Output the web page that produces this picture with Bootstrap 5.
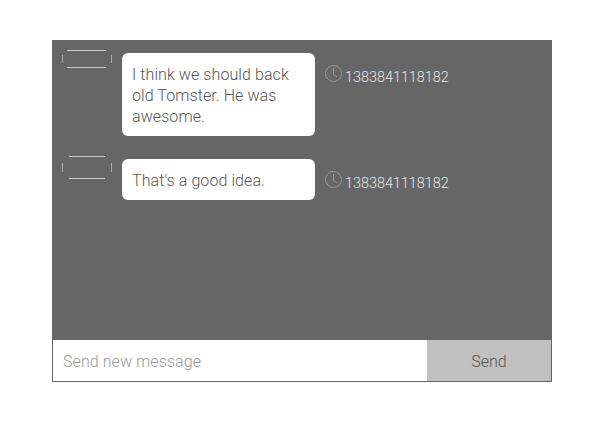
<!DOCTYPE html>
<html lang="en">
<head>
  <meta charset="UTF-8">
  <meta name="viewport" content="width=device-width, initial-scale=1.0">
  <title>Chat</title>
  <link href="https://cdn.jsdelivr.net/npm/bootstrap@5.3.0/dist/css/bootstrap.min.css" rel="stylesheet">
  <style>
    body {
      background-color: #fff;
      font-family: Roboto, "Liberation Sans", sans-serif;
      font-weight: 300;
    }

    .chat-box {
      width: 500px;
      height: 342px;
      margin: 40px 0 0 52px;
      background-color: #666;
    }

    .chat-messages {
      padding: 10px 0 0 10px;
    }

    .chat-item {
      margin-bottom: 20px;
    }

    .chat-avatar {
      width: 50px;
      height: 20px;
      margin-right: 10px;
    }

    .chat-avatar-tall {
      height: 24px;
    }

    .chat-bubble {
      width: 193px;
      margin: 3px 10px 0 0;
      padding: 11px 10px 9px;
      background-color: #fff;
      border-radius: 6px;
      color: #555;
      font-size: 16px;
      line-height: 21px;
      letter-spacing: .08px;
    }

    .chat-time {
      margin-top: 13px;
      color: #e6e6e6;
      font-size: 14.4px;
      line-height: 21px;
    }

    .chat-time span {
      margin-top: 4px;
    }

    .chat-clock {
      width: 18px;
      height: 18px;
      margin: 2px 2px 0 0;
    }

    .chat-form {
      height: 42px;
      border: 1px solid #666;
      border-top: 0;
    }

    .chat-input {
      padding: 2px 10px 0;
      border: 0;
      outline: 0;
      font-size: 16px;
      font-weight: 300;
      letter-spacing: .08px;
      color: #555;
    }

    .chat-input::placeholder {
      color: #999;
    }

    .chat-send {
      width: 124px;
      padding: 2px 0 0;
      border: 0;
      background-color: #c0c0c0;
      color: #555;
      font-size: 16px;
      font-weight: 300;
    }
  </style>
</head>
<body>
  <div class="chat-box d-flex flex-column">
    <div class="chat-messages flex-grow-1">
      <div class="chat-item d-flex align-items-start">
        <svg class="chat-avatar flex-shrink-0" viewBox="0 0 50 20">
          <path d="M5 .5H44M5 17.5H44" fill="none" stroke="#ccc" stroke-width="1"/>
          <path d="M.5 5V13M49.5 5V13" fill="none" stroke="#aaa" stroke-width="1"/>
        </svg>
        <div class="chat-bubble">I think we should back old Tomster. He was awesome.</div>
        <div class="chat-time d-flex align-items-start">
          <svg class="chat-clock flex-shrink-0" viewBox="0 0 18 18">
            <circle cx="8.5" cy="8.5" r="8" fill="none" stroke="#999" stroke-width="1"/>
            <path d="M8.5 3V9.5L12 12" fill="none" stroke="#999" stroke-width="1"/>
          </svg>
          <span>1383841118182</span>
        </div>
      </div>
      <div class="chat-item d-flex align-items-start">
        <svg class="chat-avatar chat-avatar-tall flex-shrink-0" viewBox="0 0 50 24">
          <path d="M7 .5H43M7 22.5H43" fill="none" stroke="#ccc" stroke-width="1"/>
          <path d="M.5 7V16M49.5 7V16" fill="none" stroke="#aaa" stroke-width="1"/>
        </svg>
        <div class="chat-bubble">That's a good idea.</div>
        <div class="chat-time d-flex align-items-start">
          <svg class="chat-clock flex-shrink-0" viewBox="0 0 18 18">
            <circle cx="8.5" cy="8.5" r="8" fill="none" stroke="#999" stroke-width="1"/>
            <path d="M8.5 3V9.5L12 12" fill="none" stroke="#999" stroke-width="1"/>
          </svg>
          <span>1383841118182</span>
        </div>
      </div>
    </div>
    <form class="chat-form d-flex bg-white">
      <input class="chat-input flex-grow-1" type="text" placeholder="Send new message">
      <button class="chat-send" type="button">Send</button>
    </form>
  </div>
  <script src="https://cdn.jsdelivr.net/npm/bootstrap@5.3.0/dist/js/bootstrap.bundle.min.js"></script>
</body>
</html>
